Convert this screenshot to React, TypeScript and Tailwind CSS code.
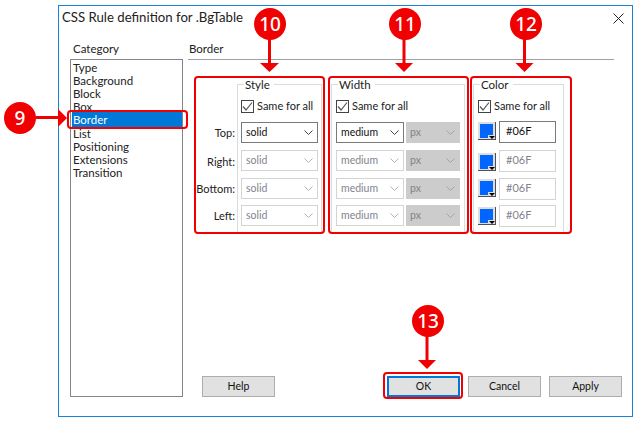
import React from 'react';

const font = "font-['Lato','Noto_Sans',sans-serif]";

const categories = ['Type', 'Background', 'Block', 'Box', 'Border', 'List', 'Positioning', 'Extensions', 'Transition'];

const rowGaps = ['mt-[9px]', 'mt-[7px]', 'mt-[7px]', 'mt-[6px]'];

const Chevron: React.FC<{ color: string }> = ({ color }) => (
  <svg width="9" height="5" viewBox="0 0 9 5" className="shrink-0">
    <path d="M0.5 0.5 L4.5 4.5 L8.5 0.5" fill="none" stroke={color} strokeWidth="1" />
  </svg>
);

const Select: React.FC<{ label: string; enabled?: boolean; width: string }> = ({ label, enabled, width }) => (
  <div
    className={`${width} h-[21px] flex items-center justify-between pl-[4px] pr-[4px] text-[10.5px] border ${
      enabled ? 'border-[#7a7a7a] text-[#111111]' : 'border-[#d4d4d4] text-[#83838f]'
    }`}
  >
    <span>{label}</span>
    <Chevron color={enabled ? '#444444' : '#b4b4b4'} />
  </div>
);

const UnitSelect: React.FC = () => (
  <div className="w-[54px] h-[21px] flex items-center justify-between pl-[4px] pr-[5px] text-[10.5px] bg-[#cccccc] text-[#83838a]">
    <span>px</span>
    <Chevron color="#a4a4a4" />
  </div>
);

const SameForAll: React.FC = () => (
  <div className="flex items-center gap-[3px] h-[14px] mt-[8px] whitespace-nowrap text-[11px]">
    <div className="w-[13px] h-[13px] border border-[#444444] bg-white flex items-center justify-center">
      <svg width="11" height="11" viewBox="0 0 11 11">
        <path d="M1 5.5 L4 9 L10 1.5" fill="none" stroke="#555555" strokeWidth="1.2" />
      </svg>
    </div>
    <span className="text-[#222222]">Same for all</span>
  </div>
);

const Group: React.FC<{ title: string; className: string; legend: string; children: React.ReactNode }> = ({ title, className, legend, children }) => (
  <fieldset className={`border border-[#dcdcdc] h-[156px] ${className}`}>
    <legend className={`pl-[1px] pr-[4px] h-[14px] leading-[16px] text-[#222222] ${legend}`}>{title}</legend>
    {children}
  </fieldset>
);

const Swatch: React.FC<{ top: string }> = ({ top }) => (
  <div className={`relative w-[18px] h-[18px] shrink-0 bg-[#dedede] border-r border-b border-[#505050] ${top}`}>
    <div className="ml-[2px] mt-[2px] w-[13px] h-[14px] bg-[#0066ff]" />
    <div className="absolute right-[0px] bottom-[0px] w-[7px] h-[4px] bg-[#dedede] flex justify-center">
      <div className="mt-[1px] w-0 h-0 border-l-[3px] border-r-[3px] border-t-[3px] border-l-transparent border-r-transparent border-t-black" />
    </div>
  </div>
);

const ColorRow: React.FC<{ enabled?: boolean; margin: string; swatchTop: string }> = ({ enabled, margin, swatchTop }) => (
  <div className={`flex gap-[3px] ${margin}`}>
    <Swatch top={swatchTop} />
    <div
      className={`w-[57px] h-[22px] leading-[18px] pl-[6px] text-[11px] border ${
        enabled ? 'border-[#7a7a7a] text-[#111111]' : 'border-[#d4d4d4] text-[#83838f]'
      }`}
    >
      #06F
    </div>
  </div>
);

const DialogButton: React.FC<{ label: string; focused?: boolean }> = ({ label, focused }) => (
  <div
    className={`w-[73px] h-[21px] flex items-center justify-center bg-[#e1e1e1] text-[#111111] text-[10.5px] ${
      focused ? 'border-2 border-[#0078d7]' : 'border border-[#adadad]'
    }`}
  >
    {label}
  </div>
);

const Badge: React.FC<{ n: string; className: string }> = ({ n, className }) => (
  <div
    className={`absolute w-[32px] h-[32px] rounded-full bg-[#f00000] text-white text-[19px] font-medium leading-[32px] text-center font-['Noto_Sans',sans-serif] ${className}`}
  >
    {n}
  </div>
);

const Marker: React.FC<{ className: string }> = ({ className }) => (
  <div className={`absolute border-2 border-[#f00000] rounded-[4px] ${className}`} />
);

const Annotations: React.FC = () => (
  <>
    <svg width="638" height="422" viewBox="0 0 638 422" className="absolute left-0 top-0">
      <g fill="#f00000">
        <rect x="36" y="116" width="23" height="3" />
        <polygon points="58,109 67,118 58,127" />
        <rect x="268" y="38" width="3" height="26" />
        <polygon points="260,63 279,63 269.5,72" />
        <rect x="402.5" y="38" width="3" height="26" />
        <polygon points="395,63 413,63 404,72" />
        <rect x="523" y="38" width="3" height="26" />
        <polygon points="515.5,63 533.5,63 524.5,72" />
        <rect x="425.5" y="334" width="3" height="27" />
        <polygon points="418,360 436,360 427,369" />
      </g>
    </svg>
    <Badge n="9" className="left-[4px] top-[102px]" />
    <Badge n="10" className="left-[254px] top-[8px]" />
    <Badge n="11" className="left-[389px] top-[8px]" />
    <Badge n="12" className="left-[510px] top-[8px]" />
    <Badge n="13" className="left-[412px] top-[305px]" />
    <Marker className="left-[67px] top-[110px] w-[121px] h-[19px]" />
    <Marker className="left-[194px] top-[76px] w-[131px] h-[158px]" />
    <Marker className="left-[328px] top-[76px] w-[141px] h-[158px]" />
    <Marker className="left-[470px] top-[76px] w-[102px] h-[158px]" />
    <Marker className="left-[383px] top-[372px] w-[80px] h-[27px]" />
  </>
);

const App: React.FC = () => {
  return (
    <div className={`relative w-[638px] h-[422px] bg-white overflow-hidden text-[11.5px] ${font}`}>
      <div className="absolute left-[58px] top-[5px] w-[575px] h-[412px] border border-[#1883d7] flex flex-col">
        <div className="h-[24px] flex items-center justify-between pl-[3px] pr-[8px] text-[#222222]">
          <span className="text-[13.2px]">CSS Rule definition for .BgTable</span>
          <svg width="11" height="11" viewBox="0 0 11 11">
            <path d="M0.5 0.5 L10.5 10.5 M10.5 0.5 L0.5 10.5" stroke="#222222" strokeWidth="1" />
          </svg>
        </div>

        <div className="flex pl-[11px]">
          {/* category list */}
          <div className="w-[113px] mr-[5px]">
            <div className="mt-[10px] h-[19px] leading-[18px] pl-[3px] text-[#222222]">Category</div>
            <div className="h-[338px] border border-[#85858a] pt-[1px] pl-[1px]">
              {categories.map((c) =>
                c === 'Border' ? (
                  <div key={c} className="relative -mt-[1px] h-[15px] pt-[1px] leading-[13px] pl-[1px] bg-[#0078d7] text-white">
                    {c}
                  </div>
                ) : (
                  <div key={c} className="h-[13px] leading-[13px] pl-[1px] text-[#222222]">
                    {c}
                  </div>
                ),
              )}
            </div>
          </div>

          {/* panel */}
          <div className="w-[434px] flex flex-col h-[367px]">
            <div className="w-[426px] mt-[10px] h-[20px] leading-[18px] pl-[1px] border-b border-[#a0a0a0] text-[#222222]">Border</div>

            <div className="flex mt-[17px]">
              <div className="w-[49px] pr-[2px] pt-[49px] text-right text-[11px] text-[#222222] leading-[14px]">
                <div>Top:</div>
                <div className="mt-[15px]">Right:</div>
                <div className="mt-[13px]">Bottom:</div>
                <div className="mt-[13px]">Left:</div>
              </div>

              <Group title="Style" legend="ml-[3px]" className="w-[85px] pl-[3px]">
                <SameForAll />
                {rowGaps.map((gap, i) => (
                  <div key={i} className={gap}>
                    <Select label="solid" enabled={i === 0} width="w-[77px]" />
                  </div>
                ))}
              </Group>

              <Group title="Width" legend="ml-[2px]" className="w-[134px] ml-[9px] pl-[4px]">
                <SameForAll />
                {rowGaps.map((gap, i) => (
                  <div key={i} className={`flex gap-[2px] ${gap}`}>
                    <Select label="medium" enabled={i === 0} width="w-[68px]" />
                    <UnitSelect />
                  </div>
                ))}
              </Group>

              <Group title="Color" legend="ml-[2px]" className="w-[91px] ml-[8px] pl-[4px]">
                <SameForAll />
                <ColorRow enabled margin="mt-[8px]" swatchTop="mt-[1px]" />
                <ColorRow margin="mt-[7px]" swatchTop="mt-[3px]" />
                <ColorRow margin="mt-[6px]" swatchTop="mt-[1px]" />
                <ColorRow margin="mt-[5px]" swatchTop="mt-[2px]" />
              </Group>
            </div>

            <div className="mt-auto flex">
              <div className="ml-[14px]">
                <DialogButton label="Help" />
              </div>
              <div className="ml-auto flex gap-[8px]">
                <DialogButton label="OK" focused />
                <DialogButton label="Cancel" />
                <DialogButton label="Apply" />
              </div>
            </div>
          </div>
        </div>
      </div>

      <Annotations />
    </div>
  );
};

export default App;
